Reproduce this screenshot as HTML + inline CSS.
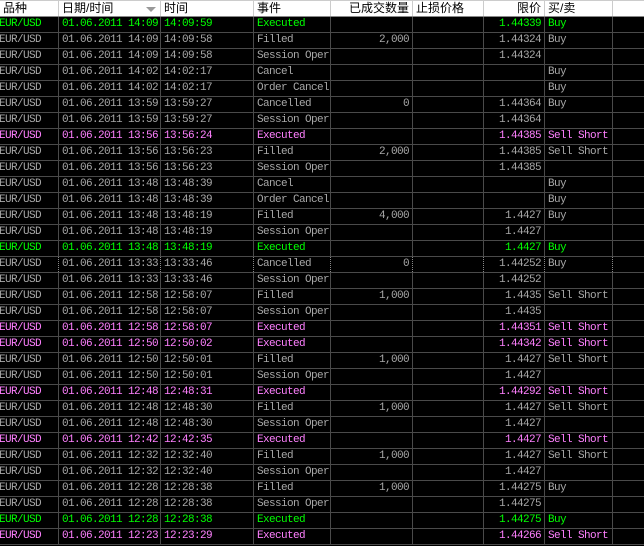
<!DOCTYPE html><html><head><meta charset="utf-8"><style>
body{margin:0;width:644px;height:546px;background:#000;overflow:hidden}
table{border-collapse:collapse;table-layout:fixed;position:absolute;left:-1px;top:0;width:655px}
td,th{height:15px;padding:0 3px;border:1px solid #4a4a4a;white-space:nowrap;overflow:hidden;font:11px/15px "Liberation Mono",monospace;letter-spacing:-0.6px;color:#a8a8a8}
th{background:#fff;color:#000;font:12px/15px "Liberation Sans","Noto Sans CJK SC",sans-serif;font-weight:normal;text-align:left;letter-spacing:0;border-color:#ccc #ccc #888 #ccc}
.r{text-align:right}
tr.g td{color:#00ff00}
tr.m td{color:#ff80ff}
tr.d td{border-style:dotted;border-color:#888}
.p{text-indent:-4px}
</style></head><body>
<table>
<colgroup><col style="width:59px"><col style="width:102px"><col style="width:93px"><col style="width:77px"><col style="width:82px"><col style="width:71px"><col style="width:61px"><col style="width:68px"><col style="width:42px"></colgroup>
<tr><th>品种</th><th style="position:relative">日期/时间<span style="position:absolute;left:87px;top:6px;width:0;height:0;border-left:5px solid transparent;border-right:5px solid transparent;border-top:5px solid #999"></span></th><th>时间</th><th>事件</th><th class="r">已成交数量</th><th>止损价格</th><th class="r">限价</th><th>买/卖</th><th></th></tr>
<tbody id="b"></tbody></table>
<script>
var d=[
"g|14:09|14:09:59|Executed||1.44339|Buy",
"w|14:09|14:09:58|Filled|2,000|1.44324|Buy",
"w|14:09|14:09:58|Session Oper||1.44324|",
"w|14:02|14:02:17|Cancel|||Buy",
"w|14:02|14:02:17|Order Cancel|||Buy",
"w|13:59|13:59:27|Cancelled|0|1.44364|Buy",
"w|13:59|13:59:27|Session Oper||1.44364|",
"m|13:56|13:56:24|Executed||1.44385|Sell Short",
"w|13:56|13:56:23|Filled|2,000|1.44385|Sell Short",
"w|13:56|13:56:23|Session Oper||1.44385|",
"w|13:48|13:48:39|Cancel|||Buy",
"w|13:48|13:48:39|Order Cancel|||Buy",
"w|13:48|13:48:19|Filled|4,000|1.4427|Buy",
"w|13:48|13:48:19|Session Oper||1.4427|",
"g|13:48|13:48:19|Executed||1.4427|Buy",
"d|13:33|13:33:46|Cancelled|0|1.44252|Buy",
"w|13:33|13:33:46|Session Oper||1.44252|",
"w|12:58|12:58:07|Filled|1,000|1.4435|Sell Short",
"w|12:58|12:58:07|Session Oper||1.4435|",
"m|12:58|12:58:07|Executed||1.44351|Sell Short",
"m|12:50|12:50:02|Executed||1.44342|Sell Short",
"w|12:50|12:50:01|Filled|1,000|1.4427|Sell Short",
"w|12:50|12:50:01|Session Oper||1.4427|",
"m|12:48|12:48:31|Executed||1.44292|Sell Short",
"w|12:48|12:48:30|Filled|1,000|1.4427|Sell Short",
"w|12:48|12:48:30|Session Oper||1.4427|",
"m|12:42|12:42:35|Executed||1.4427|Sell Short",
"w|12:32|12:32:40|Filled|1,000|1.4427|Sell Short",
"w|12:32|12:32:40|Session Oper||1.4427|",
"w|12:28|12:28:38|Filled|1,000|1.44275|Buy",
"w|12:28|12:28:38|Session Oper||1.44275|",
"g|12:28|12:28:38|Executed||1.44275|Buy",
"m|12:23|12:23:29|Executed||1.44266|Sell Short"];
var h="";d.forEach(function(s){var a=s.split("|");h+='<tr class="'+a[0]+'"><td class="p">EUR/USD</td><td>01.06.2011 '+a[1]+'</td><td>'+a[2]+'</td><td>'+a[3]+'</td><td class="r">'+a[4]+'</td><td></td><td class="r">'+a[5]+'</td><td>'+a[6]+'</td><td></td></tr>';});
document.getElementById("b").innerHTML=h;
</script></body></html>
